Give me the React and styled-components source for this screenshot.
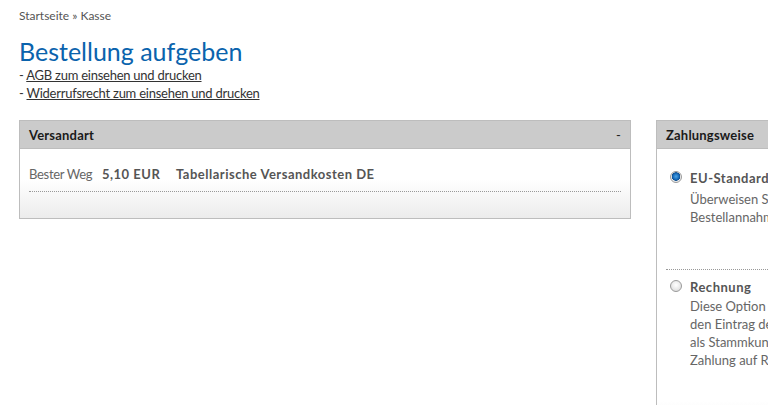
import React from 'react';
import styled, { createGlobalStyle } from 'styled-components';

const GlobalStyle = createGlobalStyle`
  html, body {
    margin: 0;
    padding: 0;
    background: #fff;
    overflow: hidden;
  }
  body {
    font-family: Lato, "Open Sans", sans-serif;
    font-size: 13px;
    color: #555;
  }
`;

const Page = styled.div`
  width: 1300px;
  padding: 8px 19px 0;
`;

const Breadcrumb = styled.div`
  font-size: 12px;
  line-height: 16px;
  color: #555;
`;

const Title = styled.h1`
  margin: 12px 0 0;
  font-size: 25px;
  line-height: 30px;
  font-weight: normal;
  color: #0a63ad;
`;

const LinkLine = styled.div`
  font-size: 13px;
  line-height: 18px;
  letter-spacing: -0.25px;
  color: #333;

  a {
    color: #333;
    text-decoration: underline;
  }
`;

const Columns = styled.div`
  display: flex;
  gap: 25px;
  margin-top: 18px;
  align-items: flex-start;
`;

const Box = styled.section`
  width: 612px;
  flex: none;
  border: 1px solid #bdbdbd;
  box-sizing: border-box;
  background: linear-gradient(to bottom, #fff 0%, #fff ${(p) => p.$fade}, #ececec 100%);
`;

const BoxHead = styled.div`
  display: flex;
  justify-content: space-between;
  align-items: center;
  height: 27px;
  padding: 0 9px;
  background: #cbcbcb;
  border-bottom: 1px solid #bdbdbd;
  font-weight: bold;
  font-size: 13px;
  letter-spacing: 0.2px;
  color: #1a1a1a;
`;

const Toggle = styled.span`
  font-weight: normal;
  color: #222;
`;

const BoxBody = styled.div`
  padding: 10px 9px ${(p) => p.$bottom}px;
`;

const ShipRow = styled.div`
  display: flex;
  align-items: baseline;
  padding: 6px 0 8px;
  border-bottom: 1px dotted #999;
  line-height: 18px;
`;

const ShipName = styled.span`
  color: #666;
  width: 73px;
  letter-spacing: -0.3px;
`;

const Strong = styled.span`
  font-weight: bold;
  color: #555;
  letter-spacing: 0.5px;
  width: ${(p) => p.$w || 'auto'};
`;

const PayItem = styled.div`
  display: flex;
  gap: 8px;
  padding: ${(p) => p.$top}px 4px ${(p) => p.$bottom}px;
  border-bottom: ${(p) => (p.$last ? 'none' : '1px dotted #999')};
  line-height: 18px;
`;

const Radio = styled.span`
  flex: none;
  width: 12px;
  height: 12px;
  margin-top: 2px;
  border-radius: 50%;
  border: 1px solid #9a9a9a;
  box-sizing: border-box;
  background: ${(p) =>
    p.$checked
      ? 'radial-gradient(circle at 50% 45%, #4aa6e8 0, #1769b8 3px, #0d4f91 4px, #e8e8e8 4.5px, #fafafa 100%)'
      : 'radial-gradient(circle at 50% 40%, #fff 0, #f0f0f0 3px, #d4d4d4 100%)'};
`;

const PayText = styled.div`
  display: flex;
  flex-direction: column;
  white-space: nowrap;
`;

const PayLabel = styled.div`
  font-weight: bold;
  color: #555;
  letter-spacing: 0.5px;
  margin-bottom: ${(p) => p.$gap}px;
`;

const PayDesc = styled.div`
  color: #666;
`;

export default function App() {
  return (
    <>
      <GlobalStyle />
      <Page>
        <Breadcrumb>Startseite » Kasse</Breadcrumb>
        <Title>Bestellung aufgeben</Title>
        <LinkLine>
          - <a href="#agb">AGB zum einsehen und drucken</a>
        </LinkLine>
        <LinkLine>
          - <a href="#widerruf">Widerrufsrecht zum einsehen und drucken</a>
        </LinkLine>
        <Columns>
          <Box $fade="60%">
            <BoxHead>
              <span>Versandart</span>
              <Toggle>-</Toggle>
            </BoxHead>
            <BoxBody $bottom={26}>
              <ShipRow>
                <ShipName>Bester Weg</ShipName>
                <Strong $w="74px">5,10 EUR</Strong>
                <Strong>Tabellarische Versandkosten DE</Strong>
              </ShipRow>
            </BoxBody>
          </Box>
          <Box $fade="88%">
            <BoxHead>
              <span>Zahlungsweise</span>
            </BoxHead>
            <BoxBody $bottom={60}>
              <PayItem $top={10} $bottom={43}>
                <Radio $checked />
                <PayText>
                  <PayLabel $gap={3}>EU-Standardüberweisung (Vorkasse)</PayLabel>
                  <PayDesc>Überweisen Sie den Rechnungsbetrag nach Erhalt der</PayDesc>
                  <PayDesc>Bestellannahme auf unser Konto.</PayDesc>
                </PayText>
              </PayItem>
              <PayItem $top={8} $bottom={10} $last>
                <Radio />
                <PayText>
                  <PayLabel $gap={1}>Rechnung</PayLabel>
                  <PayDesc>Diese Option Kann nur genutzt werden, wenn Sie</PayDesc>
                  <PayDesc>den Eintrag der Zahlungsweise freigeschaltet haben,</PayDesc>
                  <PayDesc>als Stammkunde mit mindestens zwei Bestellungen.</PayDesc>
                  <PayDesc>Zahlung auf Rechnung innerhalb von 14 Tagen.</PayDesc>
                </PayText>
              </PayItem>
            </BoxBody>
          </Box>
        </Columns>
      </Page>
    </>
  );
}
